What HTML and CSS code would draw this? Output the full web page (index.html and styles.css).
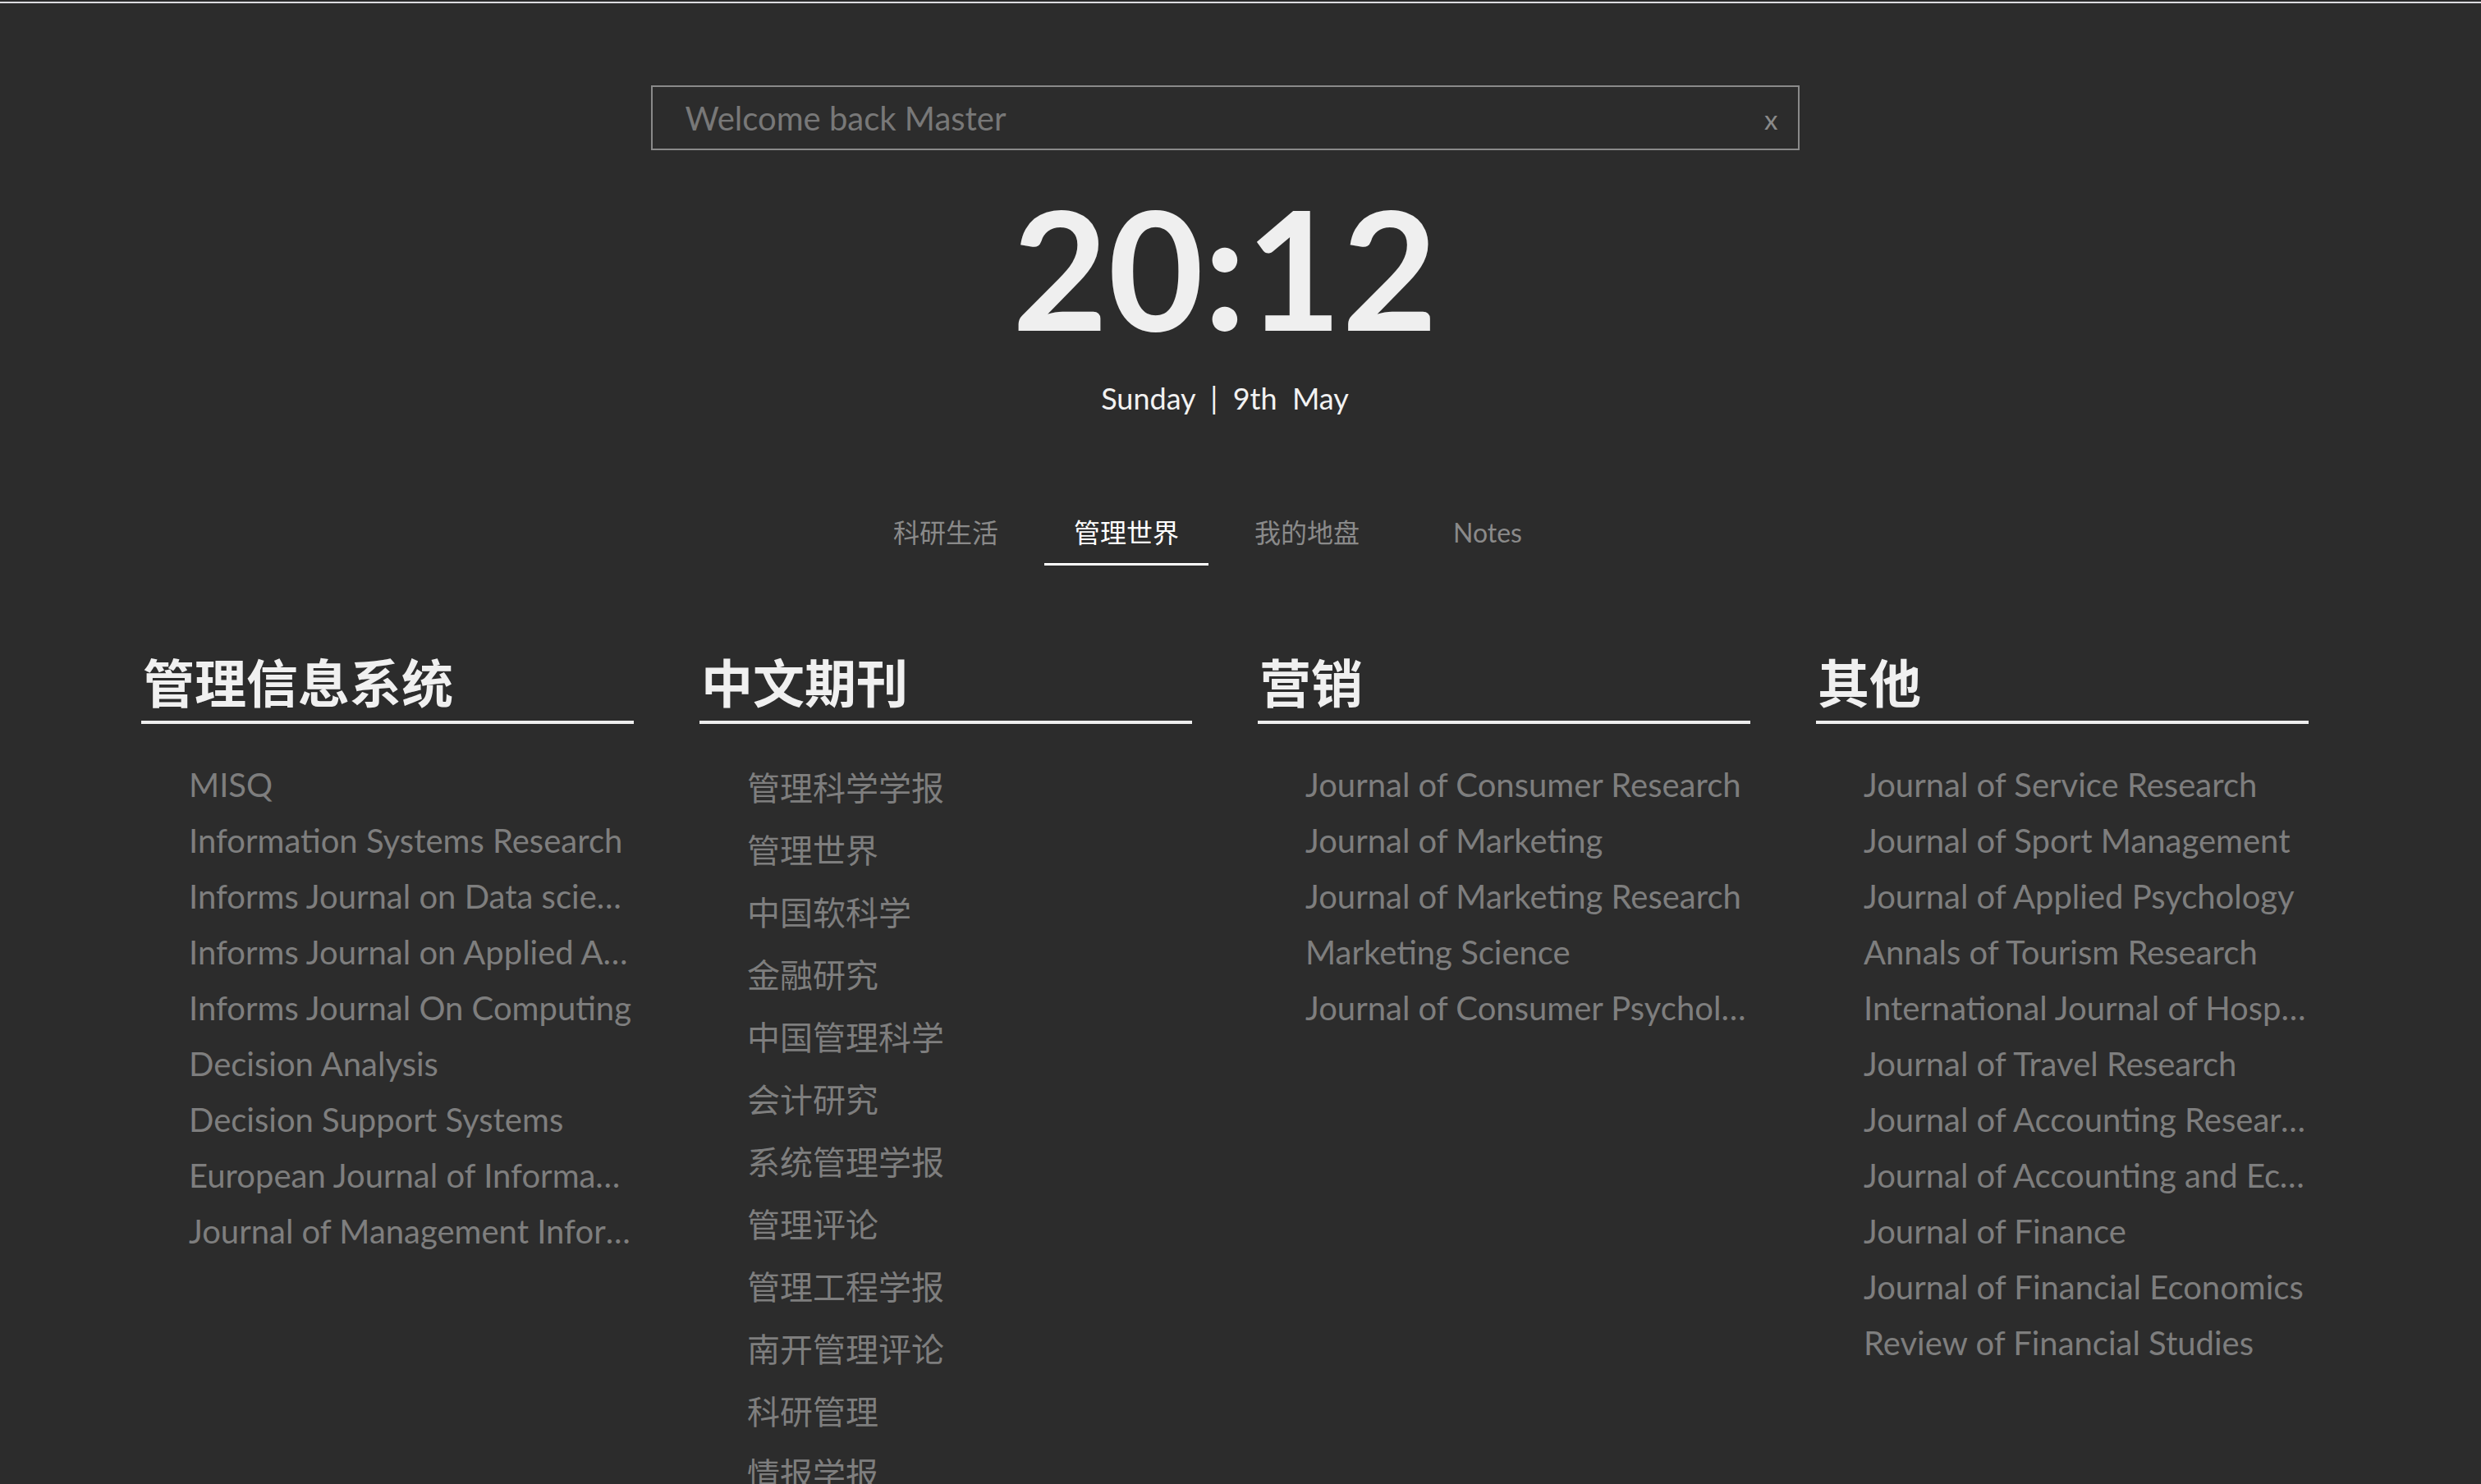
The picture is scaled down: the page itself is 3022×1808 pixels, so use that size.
FILE: index.html
```html
<!DOCTYPE html>
<html lang="zh-CN">
<head>
<meta charset="utf-8">
<title>New Tab</title>
<link rel="stylesheet" href="styles.css">
</head>
<body>
<div class="topline"></div>
<div class="page">
  <div class="search">
    <input class="search-input" type="text" placeholder="Welcome back Master">
    <span class="search-clear">x</span>
  </div>
  <div class="clock">20:12</div>
  <div class="date">Sunday&nbsp;&nbsp;|&nbsp;&nbsp;9th&nbsp;&nbsp;May</div>
  <nav class="tabs">
    <a class="tab">科研生活</a>
    <a class="tab active">管理世界</a>
    <a class="tab">我的地盘</a>
    <a class="tab">Notes</a>
  </nav>
  <div class="columns">
    <section class="col">
      <h2 class="col-title">管理信息系统</h2>
      <ul class="links">
        <li>MISQ</li>
        <li>Information Systems Research</li>
        <li>Informs Journal on Data science</li>
        <li>Informs Journal on Applied Analytics</li>
        <li>Informs Journal On Computing</li>
        <li>Decision Analysis</li>
        <li>Decision Support Systems</li>
        <li>European Journal of Information Systems</li>
        <li>Journal of Management Information Systems</li>
      </ul>
    </section>
    <section class="col">
      <h2 class="col-title">中文期刊</h2>
      <ul class="links cjk">
        <li>管理科学学报</li>
        <li>管理世界</li>
        <li>中国软科学</li>
        <li>金融研究</li>
        <li>中国管理科学</li>
        <li>会计研究</li>
        <li>系统管理学报</li>
        <li>管理评论</li>
        <li>管理工程学报</li>
        <li>南开管理评论</li>
        <li>科研管理</li>
        <li>情报学报</li>
        <li>管理学报</li>
      </ul>
    </section>
    <section class="col">
      <h2 class="col-title">营销</h2>
      <ul class="links">
        <li>Journal of Consumer Research</li>
        <li>Journal of Marketing</li>
        <li>Journal of Marketing Research</li>
        <li>Marketing Science</li>
        <li>Journal of Consumer Psychology</li>
      </ul>
    </section>
    <section class="col">
      <h2 class="col-title">其他</h2>
      <ul class="links">
        <li>Journal of Service Research</li>
        <li>Journal of Sport Management</li>
        <li>Journal of Applied Psychology</li>
        <li>Annals of Tourism Research</li>
        <li>International Journal of Hospitality Management</li>
        <li>Journal of Travel Research</li>
        <li>Journal of Accounting Research</li>
        <li>Journal of Accounting and Economics</li>
        <li>Journal of Finance</li>
        <li>Journal of Financial Economics</li>
        <li>Review of Financial Studies</li>
      </ul>
    </section>
  </div>
</div>
</body>
</html>
```
FILE: styles.css
```css
html, body {
  margin: 0;
  padding: 0;
}
body {
  background: #2c2c2c;
  font-family: Lato, "Noto Sans CJK SC", sans-serif;
  color: #f0f0f0;
  overflow: hidden;
  height: 100vh;
}
.topline {
  height: 2px;
  margin-top: 2px;
  background: #dcdce0;
}
.page {
  padding-right: 38px;
  display: flex;
  flex-direction: column;
  align-items: center;
}
.search {
  margin-top: 100px;
  width: 1399px;
  height: 79px;
  box-sizing: border-box;
  border: 2px solid #8a8a8a;
  display: flex;
  align-items: center;
  padding: 0 24px 0 40px;
}
.search-input {
  flex: 1;
  background: transparent;
  border: 0;
  outline: none;
  padding: 0;
  font-family: Lato, "Noto Sans CJK SC", sans-serif;
  font-size: 40px;
  line-height: 48px;
  height: 48px;
  color: #d0d0d0;
}
.search-input::placeholder {
  color: #787878;
}
.search-clear {
  font-size: 33px;
  color: #8a8a8a;
  line-height: 33px;
  margin-top: 4px;
}
.clock {
  margin-top: 42px;
  font-size: 201px;
  font-weight: 700;
  line-height: 201px;
  color: #efefef;
  letter-spacing: 0;
}
.date {
  margin-top: 38px;
  font-size: 36px;
  line-height: 43px;
  color: #f2f2f2;
}
.tabs {
  margin-top: 122px;
  display: flex;
  padding-right: 20px;
}
.tab {
  min-width: 200px;
  margin-right: 20px;
  box-sizing: border-box;
  text-align: center;
  font-size: 32px;
  line-height: 40px;
  padding-bottom: 17px;
  color: #8a8a8a;
  border-bottom: 3px solid transparent;
}
.tab:last-child {
  margin-right: 0;
}
.tab.active {
  color: #ffffff;
  border-bottom-color: #ffffff;
}
.columns {
  margin-top: 100px;
  display: flex;
  gap: 80px;
}
.col {
  width: 600px;
}
.col-title {
  margin: 0;
  font-family: "Noto Sans CJK SC", sans-serif;
  font-weight: 700;
  font-size: 63px;
  line-height: 80px;
  padding: 0 0 9px 2px;
  color: #f0f0f0;
  border-bottom: 4px solid #eeeeee;
}
.links {
  list-style: none;
  margin: 0;
  padding: 50px 0 0 58px;
}
.links li {
  font-size: 40px;
  line-height: 48px;
  margin-bottom: 20px;
  color: #7e7e7e;
  white-space: nowrap;
  overflow: hidden;
  text-overflow: ellipsis;
}
.links.cjk li {
  line-height: 56px;
}
```
